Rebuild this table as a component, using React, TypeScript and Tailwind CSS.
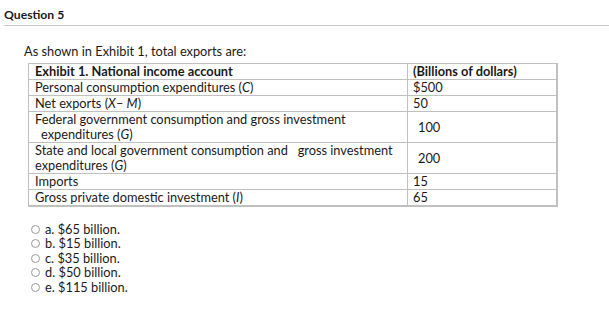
import React from 'react';

const rows: { label: React.ReactNode; value: string; tall?: boolean; indentValue?: boolean }[] = [
  { label: <>Personal consumption expenditures (<i>C</i>)</>, value: '$500' },
  { label: <>Net exports (<i>X</i>– <i>M</i>)</>, value: '50' },
  {
    label: (
      <>
        Federal government consumption and gross investment
        <br />
        <span className="pl-[6px]">expenditures (<i>G</i>)</span>
      </>
    ),
    value: '100',
    tall: true,
    indentValue: true,
  },
  {
    label: (
      <>
        <span className="whitespace-pre">State and local government consumption and   gross investment</span>
        <br />
        expenditures (<i>G</i>)
      </>
    ),
    value: '200',
    tall: true,
    indentValue: true,
  },
  { label: 'Imports', value: '15' },
  { label: <>Gross private domestic investment (<i>I</i>)</>, value: '65' },
];

const options = ['a. $65 billion.', 'b. $15 billion.', 'c. $35 billion.', 'd. $50 billion.', 'e. $115 billion.'];

function App() {
  return (
    <div className="w-[609px] h-[334px] bg-white text-[#1a1a1a] font-['Lato','Open_Sans',sans-serif] text-[12.8px] overflow-hidden">
      <div className="pl-[4px] pt-[7px]">
        <h2 className="font-bold text-[12.2px] leading-[16px] border-b border-[#c8c8c8] pb-[2px]">Question 5</h2>
      </div>

      <div className="pl-[24px] pt-[17px]">
        <p className="leading-[16px]">As shown in Exhibit 1, total exports are:</p>

        <table className="mt-[4px] ml-[4px] w-[530px] border-collapse border-r-2 border-b-2 border-l border-t border-[#c0c0c0] leading-[15px]">
          <tbody>
            <tr className="h-[16px]">
              <td className="w-[379px] border border-[#c0c0c0] px-[6px] font-bold">Exhibit 1. National income account</td>
              <td className="border border-[#c0c0c0] px-[5px] font-bold">(Billions of dollars)</td>
            </tr>
            {rows.map((r, i) => (
              <tr key={i} className={r.tall ? 'h-[31px]' : 'h-[16px]'}>
                <td className="border border-[#c0c0c0] px-[6px] align-top">{r.label}</td>
                <td className={`border border-[#c0c0c0] align-middle ${r.indentValue ? 'pl-[10px]' : 'px-[5px]'}`}>
                  {r.value}
                </td>
              </tr>
            ))}
          </tbody>
        </table>

        <div className="mt-[15px] pl-[7px] flex flex-col">
          {options.map((o) => (
            <label key={o} className="flex items-center h-[14.5px] gap-[5px]">
              <span className="w-[9px] h-[9px] rounded-full border border-[#9a9a9a] bg-white" />
              <span>{o}</span>
            </label>
          ))}
        </div>
      </div>
    </div>
  );
}

export default App;
